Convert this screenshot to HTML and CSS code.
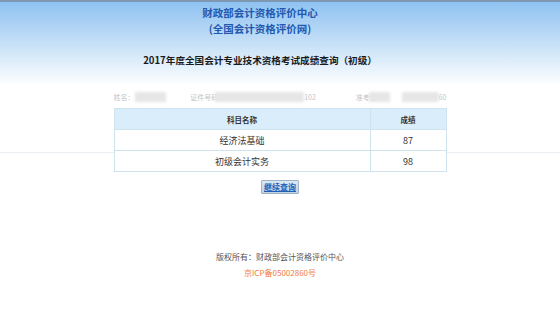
FILE: index.html
```html
<!DOCTYPE html>
<html lang="zh-CN">
<head>
<meta charset="utf-8">
<title>成绩查询</title>
<link rel="stylesheet" href="styles.css">
</head>
<body>
<div class="topbar"></div>
<div class="header">
  <div class="org">财政部会计资格评价中心</div>
  <div class="org">(全国会计资格评价网)</div>
  <div class="subtitle">2017年度全国会计专业技术资格考试成绩查询（初级）</div>
</div>
<div class="wrap">
  <div class="info">
    <span class="lbl">姓名：</span><span class="redact r1"></span>
    <span class="lbl l2">证件号码：</span><span class="redact r2"></span><span class="lbl">102</span>
    <span class="lbl l3">准考证号：</span><span class="redact r3"></span><span class="redact r4"></span><span class="lbl">60</span>
  </div>
  <table class="score">
    <thead>
      <tr><th class="c1">科目名称</th><th class="c2">成绩</th></tr>
    </thead>
    <tbody>
      <tr><td>经济法基础</td><td>87</td></tr>
      <tr><td>初级会计实务</td><td>98</td></tr>
    </tbody>
  </table>
  <div class="actions"><button class="btn" type="button">继续查询</button></div>
</div>
<div class="footer">
  <div class="copy">版权所有：财政部会计资格评价中心</div>
  <div class="icp">京ICP备05002860号</div>
</div>
</body>
</html>
```

FILE: styles.css
```css
html, body {
  margin: 0;
  padding: 0;
}
body {
  width: 560px;
  height: 316px;
  overflow: hidden;
  font-family: "Noto Sans CJK SC", "Noto Sans", sans-serif;
  background:
    linear-gradient(to bottom, transparent 152px, #e9eff3 152px, #e9eff3 153px, transparent 153px),
    linear-gradient(to bottom, #8cc1f1 0px, #b4d6f5 30px, #dcecfa 60px, #ffffff 86px, #ffffff 100%);
}
.topbar {
  height: 2px;
  background: #7f98b2;
}
.header {
  padding-top: 3px;
  padding-right: 40px;
  text-align: center;
}
.org {
  font-size: 10.5px;
  line-height: 16px;
  font-weight: bold;
  color: #2258b0;
}
.subtitle {
  margin-top: 15px;
  font-size: 9.6px;
  line-height: 16px;
  font-weight: bold;
  color: #1a1a1a;
}
.wrap {
  width: 333px;
  margin: 21px auto 0;
}
.info {
  display: flex;
  align-items: center;
  height: 16px;
  font-size: 7px;
  color: #c4c4c4;
}
.lbl {
  white-space: nowrap;
}
.redact {
  display: inline-block;
  height: 10px;
  background: #e6e6e6;
  filter: blur(1.5px);
}
.r1 { width: 33px; }
.l2 { margin-left: 24px; }
.r2 { width: 92px; margin-left: -10px; }
.l3 { margin-left: 40px; }
.r3 { width: 22px; margin-left: -22px; }
.r4 { width: 38px; margin-left: 12px; }
.score {
  width: 333px;
  margin-top: 3px;
  border-collapse: collapse;
  background: #fff;
}
.score th, .score td {
  border: 1px solid #cfe3ee;
  text-align: center;
  padding: 0;
}
.score th {
  height: 20px;
  background: #d9eefa;
  font-size: 7.5px;
  font-weight: bold;
  color: #333;
}
.score td {
  height: 20px;
  font-size: 9px;
  color: #333;
}
.c1 { width: 255px; }
.actions {
  display: flex;
  justify-content: center;
  margin-top: 8px;
}
.btn {
  font-family: "Noto Sans CJK SC", sans-serif;
  font-size: 8px;
  font-weight: bold;
  line-height: 10px;
  color: #1c5fb8;
  text-decoration: underline;
  background: linear-gradient(to bottom, #dde8f2, #bfd1e2);
  border: 1px solid #9fb3c6;
  padding: 1px 2px;
  border-radius: 1px;
}
.footer {
  margin-top: 55px;
  text-align: center;
  font-size: 8px;
  line-height: 16px;
}
.copy {
  color: #555;
}
.icp {
  color: #f07a3a;
}
```
